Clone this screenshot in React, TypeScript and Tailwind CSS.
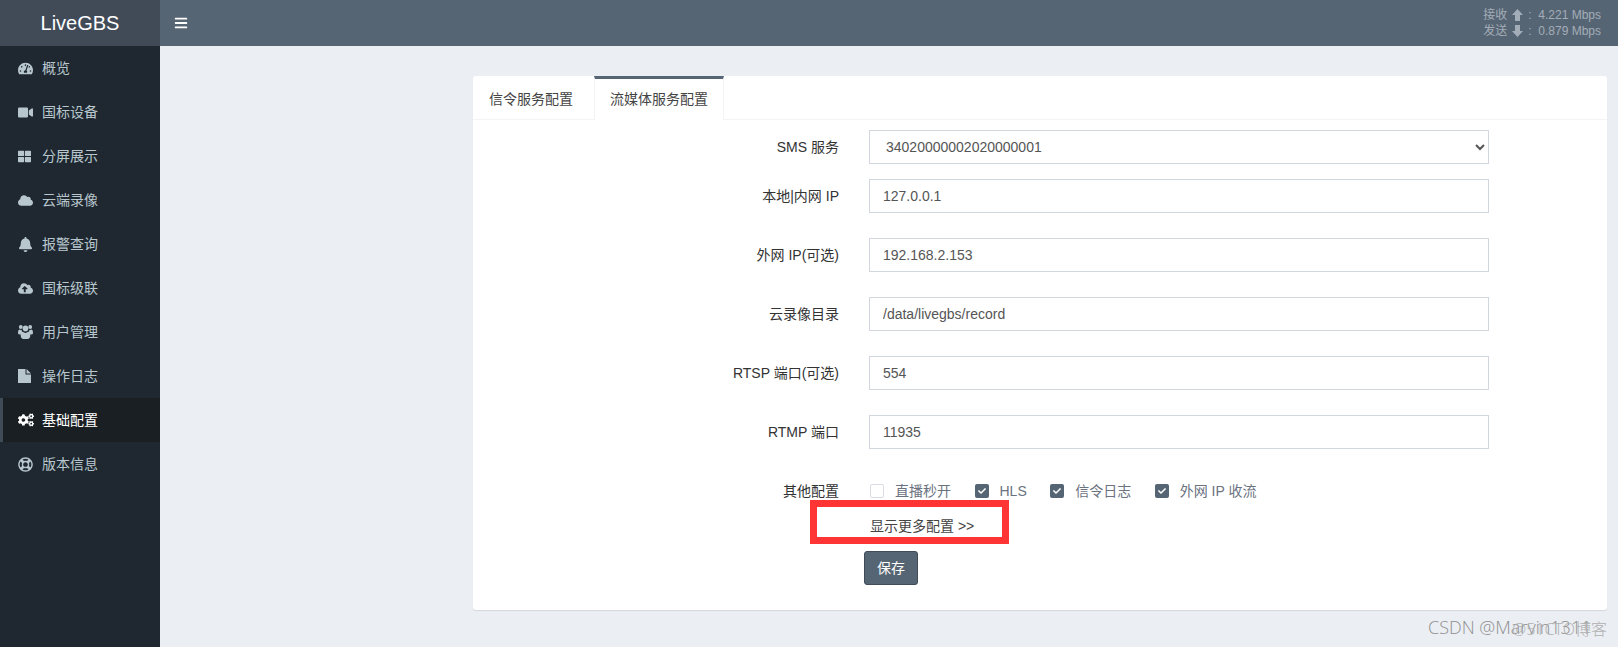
import {
  FaBars,
  FaBell,
  FaCheck,
  FaCloud,
  FaCloudUploadAlt,
  FaCogs,
  FaRegLifeRing,
  FaTachometerAlt,
  FaThLarge,
  FaVideo,
} from 'react-icons/fa';

function UsersIcon({ className }: { className?: string }) {
  return (
    <svg viewBox="0 0 15 14" width="15" height="14" fill="currentColor" className={className}>
      <circle cx="2.8" cy="2" r="1.9" />
      <circle cx="12.2" cy="2" r="1.9" />
      <circle cx="7.5" cy="3.4" r="2.8" />
      <path d="M0 8.2C0 5.6.7 4.6 1.9 4.6c.6.5 1.2.7 2 .6-.1 1 .3 1.9 1 2.5C3.700 8 3 8.800 2.700 9.400 1 9.400 0 9.200 0 8.200zM15 8.200c0-2.600-.7-3.600-1.900-3.600-.6.5-1.200.7-2 .6.1 1-.3 1.900-1 2.500 1.200.3 1.900 1.100 2.200 1.700 1.700 0 2.700-.2 2.700-1.200z" />
      <path d="M4.800 6.800c.7.7 1.700 1.100 2.700 1.100s2-.4 2.700-1.100c1.500.2 2.100 1.600 2.100 4 0 1.900-1.200 3.200-2.700 3.200H5.400c-1.500 0-2.700-1.300-2.700-3.200 0-2.400.6-3.800 2.100-4z" />
    </svg>
  );
}

function FileIcon({ className }: { className?: string }) {
  return (
    <svg viewBox="0 0 13 14" width="13" height="14" fill="currentColor" className={className}>
      <path d="M0 0h7.500v5.500H13V14H0z" />
      <path d="M8.500 0 13 4.500H8.500z" />
    </svg>
  );
}

function ArrowIcon({ down }: { down?: boolean }) {
  return (
    <svg viewBox="0 0 11 12" width="11" height="12" fill="currentColor" className={down ? 'mx-[5px] rotate-180' : 'mx-[5px]'}>
      <polygon points="5.500,0 11,6 8,6 8,12 3,12 3,6 0,6" />
    </svg>
  );
}

const MENU = [
  { label: '概览', icon: FaTachometerAlt, size: 'text-[15px]' },
  { label: '国标设备', icon: FaVideo, size: 'text-[15px]' },
  { label: '分屏展示', icon: FaThLarge, size: 'text-[13px]' },
  { label: '云端录像', icon: FaCloud, size: 'text-[15px]' },
  { label: '报警查询', icon: FaBell, size: 'text-[15px]' },
  { label: '国标级联', icon: FaCloudUploadAlt, size: 'text-[15px]' },
  { label: '用户管理', icon: UsersIcon, size: '' },
  { label: '操作日志', icon: FileIcon, size: '' },
  { label: '基础配置', icon: FaCogs, size: 'text-[16px]', active: true },
  { label: '版本信息', icon: FaRegLifeRing, size: 'text-[15px]' },
];

const FIELDS = [
  { label: '本地|内网 IP', value: '127.0.0.1' },
  { label: '外网 IP(可选)', value: '192.168.2.153' },
  { label: '云录像目录', value: '/data/livegbs/record' },
  { label: 'RTSP 端口(可选)', value: '554' },
  { label: 'RTMP 端口', value: '11935' },
];

const OPTIONS = [
  { label: '直播秒开', checked: false },
  { label: 'HLS', checked: true },
  { label: '信令日志', checked: true },
  { label: '外网 IP 收流', checked: true },
];

const FONT = "font-['Liberation_Sans','Noto_Sans_CJK_SC',sans-serif]";

function Sidebar() {
  return (
    <aside className="flex w-40 shrink-0 flex-col bg-[#1f2730]">
      <div className="flex h-[46px] items-center justify-center bg-[#414b58] text-[20px] text-white">LiveGBS</div>
      <nav>
        {MENU.map(({ label, icon: Icon, size, active }) => (
          <div
            key={label}
            className={
              active
                ? 'flex h-11 items-center border-l-[3px] border-[#414b58] bg-[#1a1f24] pl-[15px] text-[14px] text-white'
                : 'flex h-11 items-center pl-[18px] text-[14px] text-[#b8c7ce]'
            }
          >
            <span className="flex w-[24px] shrink-0 items-center">
              <Icon className={size} />
            </span>
            {label}
          </div>
        ))}
      </nav>
    </aside>
  );
}

function Header() {
  return (
    <header className="flex h-[46px] items-center justify-between bg-[#566573] pl-[14px] pr-[17px]">
      <FaBars className="text-[14px] text-white" />
      <div className="text-[12px] leading-[16px] text-[#a3adb8]">
        <div className="flex items-center">
          接收 <ArrowIcon /> :&nbsp;&nbsp;4.221 Mbps
        </div>
        <div className="flex items-center">
          发送 <ArrowIcon down /> :&nbsp;&nbsp;0.879 Mbps
        </div>
      </div>
    </header>
  );
}

function ConfigForm() {
  return (
    <div className="pt-[10px] text-[14px]">
      <div className="mb-[15px] flex items-center">
        <label className="w-[366px] text-right text-[#333]">SMS 服务</label>
        <select
          defaultValue="34020000002020000001"
          className="ml-[30px] h-[34px] w-[620px] border border-[#d2d6de] bg-white px-[12px] text-[14px] text-[#555]"
        >
          <option>34020000002020000001</option>
        </select>
      </div>
      {FIELDS.map((field) => (
        <div key={field.label} className="mb-[25px] flex items-center">
          <label className="w-[366px] text-right text-[#333]">{field.label}</label>
          <input
            readOnly
            value={field.value}
            className="ml-[30px] h-[34px] w-[620px] border border-[#d2d6de] px-[13px] text-[14px] text-[#555]"
          />
        </div>
      ))}
      <div className="mt-[32px] flex h-[20px] items-center">
        <label className="w-[366px] text-right text-[#333]">其他配置</label>
        <div className="ml-[31px] flex items-center text-[#6b7280]">
          {OPTIONS.map((opt) => (
            <span key={opt.label} className="mr-[23.5px] flex items-center">
              <span
                className={
                  opt.checked
                    ? 'mr-[11px] flex h-[14px] w-[14px] items-center justify-center rounded-[2px] bg-[#566573]'
                    : 'mr-[11px] h-[14px] w-[14px] rounded-[2px] border border-[#d9dce3] bg-white'
                }
              >
                {opt.checked && <FaCheck className="text-[8px] text-white" />}
              </span>
              {opt.label}
            </span>
          ))}
        </div>
      </div>
      <div className="relative mt-[15px] h-[20px] pl-[397px] leading-[20px] text-[#444]">
        显示更多配置 &gt;&gt;
        <div className="absolute left-[337px] top-[-16px] h-[44px] w-[199px] border-[7px] border-[#ff3535]" />
      </div>
      <button className="ml-[391px] mt-[15px] h-[34px] w-[54px] rounded-[3px] border border-[#414b58] bg-[#566573] text-[14px] text-white">
        保存
      </button>
    </div>
  );
}

export default function App() {
  return (
    <div className={`relative flex h-[647px] w-[1618px] overflow-hidden ${FONT}`}>
      <Sidebar />
      <div className="flex flex-1 flex-col bg-[#ebeef3]">
        <Header />
        <main className="ml-[313px] mr-[11px] mt-[30px]">
          <div className="h-[534px] rounded-[3px] bg-white shadow-[0_1px_1px_rgba(0,0,0,0.1)]">
            <div className="flex h-[44px] border-b border-[#f4f4f4]">
              <div className="flex w-[121px] items-center border-t-[3px] border-transparent pl-[16px] text-[14px] text-[#444]">
                信令服务配置
              </div>
              <div className="flex h-[44px] w-[130px] items-center justify-center border-x border-t-[3px] border-[#f4f4f4] border-t-[#566573] bg-white text-[14px] text-[#444]">
                流媒体服务配置
              </div>
            </div>
            <ConfigForm />
          </div>
        </main>
      </div>
      <div className="absolute left-[1428px] top-[614px] font-['Open_Sans','Noto_Sans_CJK_SC',sans-serif] text-[18px] font-light text-[#8f8f8f]">
        CSDN @Marvin1311
      </div>
      <div className="absolute left-[1512px] top-[617px] font-['Open_Sans','Noto_Sans_CJK_SC',sans-serif] text-[16px] font-light text-[#b0b0b0]">
        @51CTO博客
      </div>
    </div>
  );
}
